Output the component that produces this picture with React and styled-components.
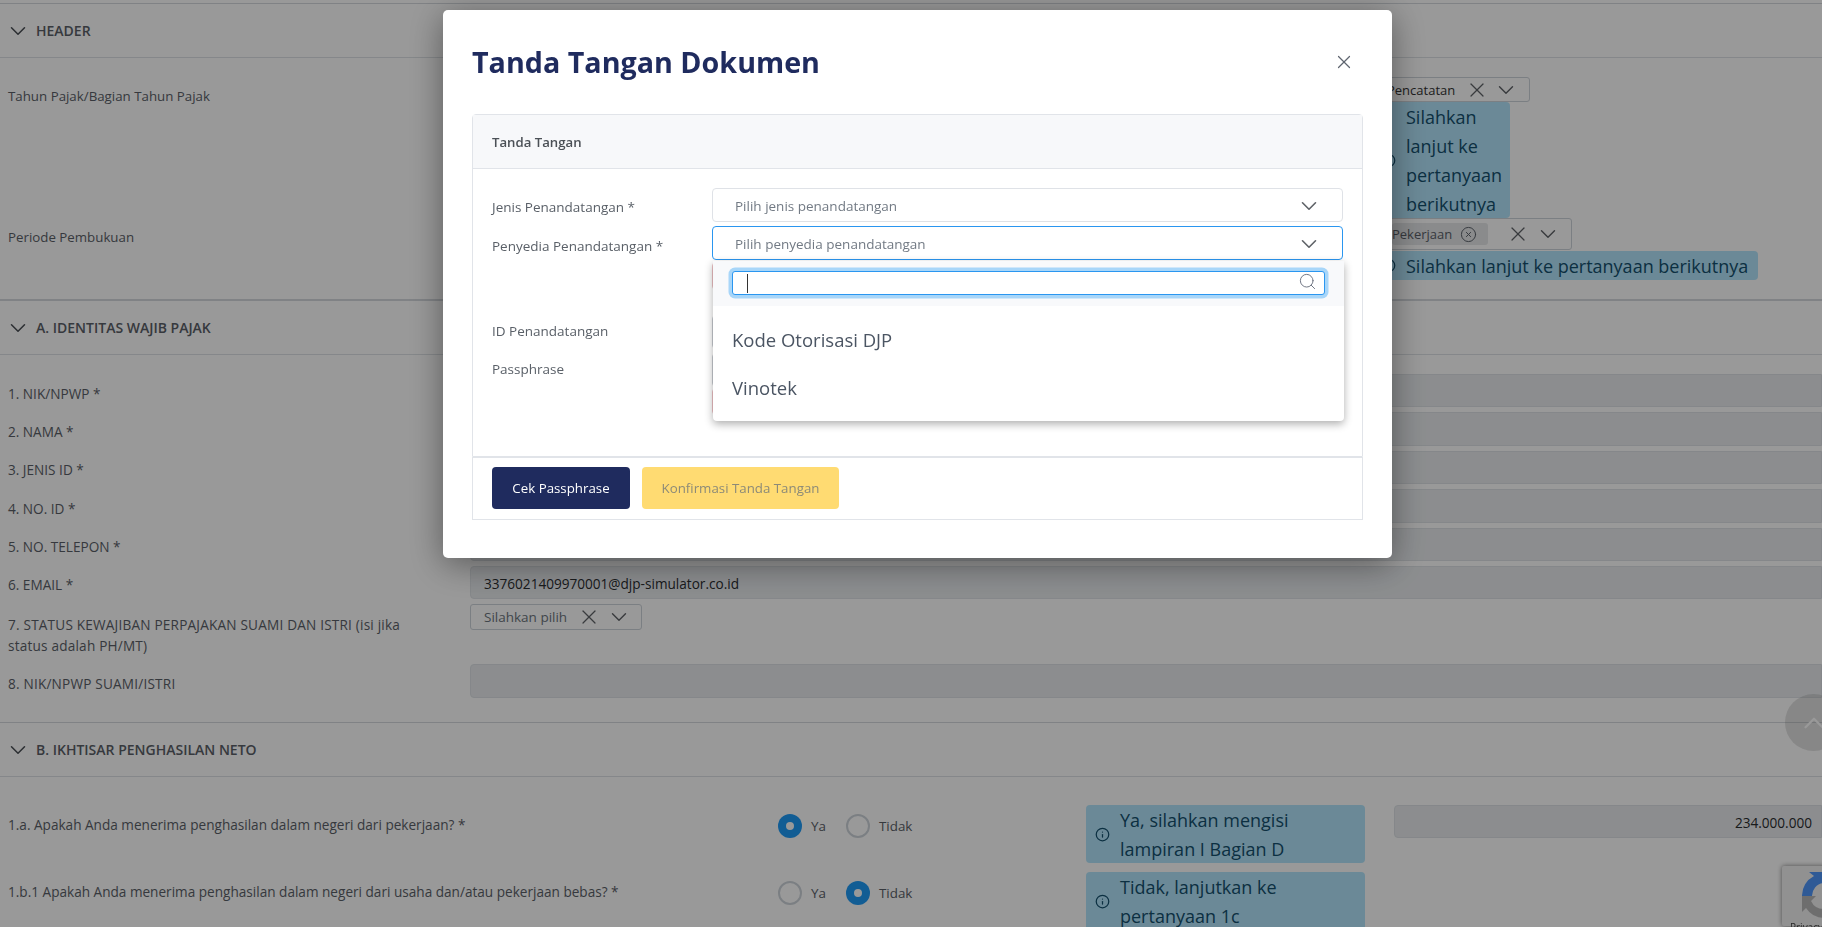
import React from 'react';
import styled, { createGlobalStyle, css } from 'styled-components';
import { X, ChevronDown, ChevronUp, Search, Info, CircleX } from 'lucide-react';

const Global = createGlobalStyle`
  html, body { margin: 0; padding: 0; height: 100%; overflow: hidden; background: #fff; }
  body { font-family: "Open Sans", "Noto Sans", "Liberation Sans", sans-serif; color: #4b5563; }
  * { box-sizing: border-box; }
`;

const Page = styled.div`
  height: 927px;
  width: 1822px;
  overflow: hidden;
  padding-top: 3px;
`;
const SectionHead = styled.div`
  display: flex;
  align-items: center;
  gap: 5px;
  height: ${p => p.$h || 55}px;
  padding-left: 5px;
  border-top: ${p => p.$thick ? 2 : 1}px solid #d5d9de;
  border-bottom: 1px solid #dee2e6;
  font-size: 14px;
  font-weight: 600;
  color: #5b6068;
`;
const Chevron = styled(ChevronDown)`
  flex: none;
  color: #4b5056;
`;
const HeaderBody = styled.div`
  height: 241px;
  padding-top: 19px;
`;
const HeaderRow = styled.div`
  display: grid;
  grid-template-columns: 1372px 1fr;
`;
const FieldLabel = styled.div`
  padding: ${p => p.$top || 0}px 0 ${p => p.$bottom || 0}px 8px;
  font-size: ${p => p.$size || 13.6}px;
  letter-spacing: ${p => p.$track || 0}px;
  line-height: 21px;
  color: #5b6068;
  max-width: ${p => p.$max || 'none'};
`;
const Stack = styled.div`
  display: flex;
  flex-direction: column;
  align-items: flex-start;
`;
const MiniSelect = styled.div`
  display: flex;
  align-items: center;
  height: ${p => p.$h}px;
  width: ${p => p.$w}px;
  padding-left: ${p => p.$pl || 0}px;
  border: 1px solid #ced4da;
  border-radius: 3px;
  font-size: 13px;
  color: #333;
`;
const Tag = styled.span`
  display: inline-flex;
  align-items: center;
  gap: 8px;
  height: 22px;
  width: ${p => p.$w}px;
  background: #e6e8ea;
  border-radius: 3px;
  color: #5a6068;
  font-size: 13px;
`;
const Notice = styled.div`
  display: flex;
  align-items: center;
  gap: 10px;
  width: ${p => p.$w ? `${p.$w}px` : 'auto'};
  margin-top: ${p => p.$mt || 0}px;
  padding: 0 10px 0 9px;
  background: #b3e5fc;
  border-radius: 4px;
  color: #14506e;
  font-size: 18px;
  line-height: 29px;
`;
const NoticeText = styled.span`
  margin: 1px 0 -1px;
`;
const NoticeIcon = styled(Info)`
  flex: none;
  width: 15px;
  height: 15px;
`;
const ClearIcon = styled(X)`
  color: #5f6368;
  flex: none;
  margin-left: ${p => p.$ml || 0}px;
`;
const SelectChevron = styled(ChevronDown)`
  color: #5f6368;
  flex: none;
  margin-left: ${p => p.$ml || 0}px;
`;
const IdBody = styled.div`
  display: flex;
  flex-direction: column;
  gap: 5px;
  padding-top: 19px;
  height: 367px;
`;
const IdRow = styled.div`
  display: grid;
  grid-template-columns: 470px 1fr;
`;
const ReadOnly = styled.div`
  display: flex;
  align-items: center;
  justify-content: ${p => p.$right ? 'flex-end' : 'flex-start'};
  height: ${p => p.$h || 33.4}px;
  padding: 2px 9px 0 13px;
  background: #e9ecef;
  border: 1px solid #dee2e6;
  border-radius: 4px 0 0 4px;
  font-size: 13.6px;
  color: #2a2d30;
`;
const StatusSelect = styled.div`
  display: flex;
  align-items: center;
  width: 172px;
  height: 26px;
  padding-left: 13px;
  border: 1px solid #ced4da;
  border-radius: 3px;
  font-size: 13.5px;
  color: #6c757d;
`;
const IncomeBody = styled.div`
  display: flex;
  flex-direction: column;
  gap: 9px;
  padding-top: 28px;
`;
const IncomeRow = styled.div`
  display: grid;
  grid-template-columns: 770px 308px 279px 1fr;
  padding-left: 8px;
  align-items: start;
`;
const QuestionLabel = styled.div`
  padding-top: 9px;
  font-size: 13.6px;
  line-height: 21px;
  color: #5b6068;
`;
const RadioGroup = styled.div`
  display: flex;
  align-items: center;
  padding-top: 9px;
  height: 33px;
`;
const RadioDot = styled.span`
  flex: none;
  width: 24px;
  height: 24px;
  border-radius: 50%;
  ${p => p.$on ? css`
    background: #1f9bf7;
    position: relative;
    &::after { content: ''; position: absolute; left: 8px; top: 8px; width: 8px; height: 8px; border-radius: 50%; background: #fff; }
  ` : css`
    border: 2px solid #ced4da;
  `}
`;
const RadioText = styled.span`
  font-size: 13.4px;
  color: #5b6068;
  margin: 0 ${p => p.$mr}px 0 9px;
`;
const IncomeValue = styled(ReadOnly)`
  margin-left: 29px;
`;

const Overlay = styled.div`
  position: fixed;
  inset: 0;
  background: rgba(0, 0, 0, 0.4);
  padding: 10px 0 0 443px;
`;
const Modal = styled.div`
  width: 949px;
  height: 548px;
  background: #fff;
  border-radius: 5px;
  padding: 0 29px;
  box-shadow: 0 6px 34px rgba(0, 0, 0, 0.42);
`;
const ModalHead = styled.div`
  display: flex;
  align-items: center;
  justify-content: space-between;
  height: 104px;
  padding: 0 8px 1px 0;
`;
const ModalTitle = styled.h1`
  margin: 0;
  font-size: 28.7px;
  font-weight: 700;
  color: #1f2b5e;
`;
const CloseIcon = styled(X)`
  color: #5f6570;
`;
const CardTop = styled.div`
  border: 1px solid #e1e4e9;
  border-radius: 4px 4px 0 0;
`;
const CardTitle = styled.div`
  display: flex;
  align-items: center;
  height: 54px;
  padding-left: 19px;
  background: #f7f8fa;
  border-bottom: 1px solid #e1e4e9;
  font-size: 13.2px;
  font-weight: 600;
  color: #4b5056;
`;
const CardBody = styled.div`
  padding: 19px 19px 0;
  height: 287px;
  display: flex;
  flex-direction: column;
`;
const FormRow = styled.div`
  display: grid;
  grid-template-columns: 220px 1fr;
  margin-bottom: ${p => p.$mb || 0}px;
`;
const FormLabel = styled.div`
  padding-top: ${p => p.$top ?? 9}px;
  margin-top: ${p => p.$mt || 0}px;
  font-size: 13.5px;
  line-height: 21px;
  color: #5a6068;
`;
const SelectBox = styled.div`
  position: relative;
  display: flex;
  align-items: center;
  justify-content: space-between;
  height: 34px;
  padding: 1px 20px 0 22px;
  border: 1px solid ${p => p.$focus ? '#2a96f0' : '#dfe2e7'};
  border-radius: 4px;
  font-size: 13.5px;
  color: #727a84;
`;
const HiddenBox = styled.div`
  grid-column: 2;
  height: ${p => p.$h}px;
  margin-top: ${p => p.$mt || 0}px;
  border-radius: 4px;
  border: 1px solid ${p => p.$bad ? '#eec0c4' : '#c8ccd2'};
`;
const Dropdown = styled.div`
  position: absolute;
  left: 0;
  right: -2px;
  top: 34px;
  height: 160px;
  background: #fff;
  border-radius: 0 0 4px 4px;
  box-shadow: 0 3px 8px rgba(0, 0, 0, 0.32);
  z-index: 3;
`;
const SearchArea = styled.div`
  height: 45px;
  padding: 10px 19px 0 19px;
  background: #f8f9fb;
`;
const SearchBox = styled.div`
  display: flex;
  align-items: center;
  justify-content: space-between;
  height: 24px;
  padding: 0 7px 0 14px;
  background: #fff;
  border: 1px solid #2a96f0;
  border-radius: 3px;
  box-shadow: 0 0 0 3.5px #a8d6f9;
`;
const Caret = styled.span`
  width: 1px;
  height: 19px;
  background: #333;
`;
const SearchGlyph = styled(Search)`
  margin-bottom: 3px;
  color: #6b7280;
`;
const OptionList = styled.div`
  padding-top: 9px;
`;
const Option = styled.div`
  height: 48px;
  display: flex;
  align-items: center;
  padding-left: 19px;
  font-size: 18.5px;
  color: #4b5563;
`;
const CardFoot = styled.div`
  display: flex;
  gap: 12px;
  height: 63px;
  padding: 9px 0 0 19px;
  border: 1px solid #e1e4e9;
`;
const Btn = styled.div`
  display: flex;
  align-items: center;
  justify-content: center;
  width: ${p => p.$w}px;
  height: 42px;
  border-radius: 4px;
  font-size: 13.3px;
  background: ${p => p.$gold ? '#ffdb72' : '#1f2b5e'};
  color: ${p => p.$gold ? '#8c8a78' : '#fff'};
`;
const ScrollTop = styled.div`
  position: fixed;
  left: 1785px;
  top: 694px;
  width: 57px;
  height: 57px;
  border-radius: 50%;
  background: rgba(120, 120, 120, 0.22);
  display: flex;
  align-items: center;
  justify-content: center;
  color: #fff;
`;
const CaptchaBadge = styled.div`
  position: fixed;
  left: 1782px;
  top: 866px;
  width: 256px;
  height: 60px;
  padding: 6px 0 0 20px;
  background: #f2f2f2;
  border-radius: 2px;
  box-shadow: 0 0 5px rgba(0, 0, 0, 0.5);
  color: #444;
`;
const CaptchaMark = styled.svg`
  display: block;
`;
const CaptchaText = styled.div`
  margin: 3px 0 0 -12px;
  font-size: 10px;
  line-height: 12px;
`;

const CaptchaLogo = () => (
  <CaptchaMark width="44" height="46" viewBox="0 0 44 46">
    <path d="M0 24 A22 22 0 0 1 12 4 L7 0 H26 V15 L21 11 A13 13 0 0 0 10 24 Z" fill="#4f97fb" />
    <path d="M0 24 H14 L9 29 A14 14 0 0 0 22 37 V46 A22 22 0 0 1 4 36 L0 40 Z" fill="#b8b8b8" />
  </CaptchaMark>
);

const identity = [
  ['1. NIK/NPWP *'],
  ['2. NAMA *'],
  ['3. JENIS ID *'],
  ['4. NO. ID *'],
  ['5. NO. TELEPON *'],
  ['6. EMAIL *', '3376021409970001@djp-simulator.co.id'],
];

export default function App() {
  return (
    <>
      <Global />
      <Page>
        <SectionHead>
          <Chevron size={26} strokeWidth={1.4} />
          HEADER
        </SectionHead>
        <HeaderBody>
          <HeaderRow>
            <FieldLabel $top={9} $size={13.3}>Tahun Pajak/Bagian Tahun Pajak</FieldLabel>
            <Stack>
              <MiniSelect $h={25} $w={158} $pl={14}>
                Pencatatan
                <ClearIcon size={24} strokeWidth={1.2} $ml={10} />
                <SelectChevron size={26} strokeWidth={1.3} $ml={4} />
              </MiniSelect>
              <Notice $w={138}>
                <NoticeIcon />
                <NoticeText>Silahkan lanjut ke pertanyaan berikutnya</NoticeText>
              </Notice>
            </Stack>
          </HeaderRow>
          <HeaderRow>
            <FieldLabel $top={9} $size={13.3}>Periode Pembukuan</FieldLabel>
            <Stack>
              <MiniSelect $h={32} $w={200} $pl={19}>
                <Tag $w={96}>
                  Pekerjaan
                  <CircleX size={17} strokeWidth={1.4} />
                </Tag>
                <ClearIcon size={24} strokeWidth={1.2} $ml={18} />
                <SelectChevron size={26} strokeWidth={1.3} $ml={5} />
              </MiniSelect>
              <Notice $mt={1}>
                <NoticeIcon />
                <NoticeText>Silahkan lanjut ke pertanyaan berikutnya</NoticeText>
              </Notice>
            </Stack>
          </HeaderRow>
        </HeaderBody>
        <SectionHead $thick $h={56}>
          <Chevron size={26} strokeWidth={1.4} />
          A. IDENTITAS WAJIB PAJAK
        </SectionHead>
        <IdBody>
          {identity.map(([label, value]) => (
            <IdRow key={label}>
              <FieldLabel $top={8.5}>{label}</FieldLabel>
              <ReadOnly>{value}</ReadOnly>
            </IdRow>
          ))}
          <IdRow>
            <FieldLabel $top={10} $bottom={3} $max="420px" $track={0.2}>
              7. STATUS KEWAJIBAN PERPAJAKAN SUAMI DAN ISTRI (isi jika status adalah PH/MT)
            </FieldLabel>
            <Stack>
              <StatusSelect>
                Silahkan pilih
                <ClearIcon size={24} strokeWidth={1.2} $ml={10} />
                <SelectChevron size={26} strokeWidth={1.3} $ml={5} />
              </StatusSelect>
            </Stack>
          </IdRow>
          <IdRow>
            <FieldLabel $top={9} $track={0.2}>8. NIK/NPWP SUAMI/ISTRI</FieldLabel>
            <ReadOnly $h={34} />
          </IdRow>
        </IdBody>
        <SectionHead>
          <Chevron size={26} strokeWidth={1.4} />
          B. IKHTISAR PENGHASILAN NETO
        </SectionHead>
        <IncomeBody>
          <IncomeRow>
            <QuestionLabel>1.a. Apakah Anda menerima penghasilan dalam negeri dari pekerjaan? *</QuestionLabel>
            <RadioGroup>
              <RadioDot $on />
              <RadioText $mr={20}>Ya</RadioText>
              <RadioDot />
              <RadioText $mr={0}>Tidak</RadioText>
            </RadioGroup>
            <Notice>
              <NoticeIcon />
              <NoticeText>Ya, silahkan mengisi lampiran I Bagian D</NoticeText>
            </Notice>
            <IncomeValue $right>234.000.000</IncomeValue>
          </IncomeRow>
          <IncomeRow>
            <QuestionLabel>1.b.1 Apakah Anda menerima penghasilan dalam negeri dari usaha dan/atau pekerjaan bebas? *</QuestionLabel>
            <RadioGroup>
              <RadioDot />
              <RadioText $mr={20}>Ya</RadioText>
              <RadioDot $on />
              <RadioText $mr={0}>Tidak</RadioText>
            </RadioGroup>
            <Notice>
              <NoticeIcon />
              <NoticeText>Tidak, lanjutkan ke pertanyaan 1c</NoticeText>
            </Notice>
          </IncomeRow>
        </IncomeBody>
      </Page>
      <ScrollTop>
        <ChevronUp size={34} strokeWidth={1.6} />
      </ScrollTop>
      <CaptchaBadge>
        <CaptchaLogo />
        <CaptchaText>Privacy</CaptchaText>
      </CaptchaBadge>
      <Overlay>
        <Modal>
          <ModalHead>
            <ModalTitle>Tanda Tangan Dokumen</ModalTitle>
            <CloseIcon size={22} strokeWidth={1.3} />
          </ModalHead>
          <CardTop>
            <CardTitle>Tanda Tangan</CardTitle>
            <CardBody>
              <FormRow $mb={4}>
                <FormLabel>Jenis Penandatangan *</FormLabel>
                <SelectBox>
                  Pilih jenis penandatangan
                  <SelectChevron size={26} strokeWidth={1.5} />
                </SelectBox>
              </FormRow>
              <FormRow>
                <FormLabel $top={10}>Penyedia Penandatangan *</FormLabel>
                <SelectBox $focus>
                  Pilih penyedia penandatangan
                  <SelectChevron size={26} strokeWidth={1.5} />
                  <Dropdown>
                    <SearchArea>
                      <SearchBox>
                        <Caret />
                        <SearchGlyph size={19} strokeWidth={1.2} />
                      </SearchBox>
                    </SearchArea>
                    <OptionList>
                      <Option>Kode Otorisasi DJP</Option>
                      <Option>Vinotek</Option>
                    </OptionList>
                  </Dropdown>
                </SelectBox>
              </FormRow>
              <FormRow>
                <HiddenBox $bad $h={28} $mt={2} />
              </FormRow>
              <FormRow $mb={4}>
                <FormLabel $top={6} $mt={25}>ID Penandatangan</FormLabel>
                <HiddenBox $h={34} $mt={25} />
              </FormRow>
              <FormRow>
                <FormLabel $top={6}>Passphrase</FormLabel>
                <HiddenBox $h={34} />
              </FormRow>
              <FormRow>
                <HiddenBox $bad $h={27} $mt={1} />
              </FormRow>
            </CardBody>
          </CardTop>
          <CardFoot>
            <Btn $w={138}>Cek Passphrase</Btn>
            <Btn $w={197} $gold>Konfirmasi Tanda Tangan</Btn>
          </CardFoot>
        </Modal>
      </Overlay>
    </>
  );
}
